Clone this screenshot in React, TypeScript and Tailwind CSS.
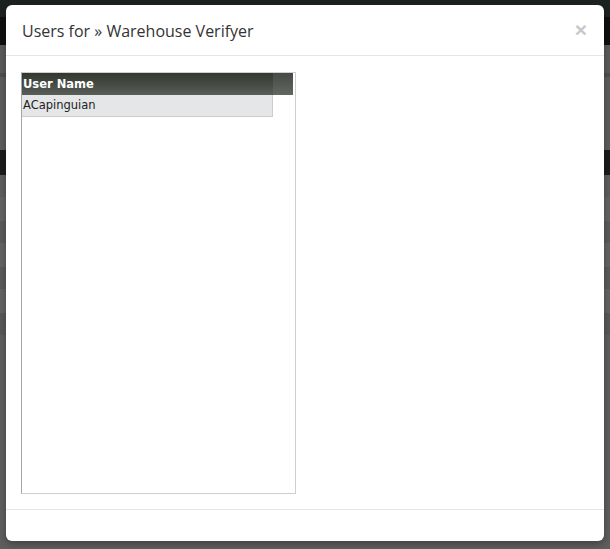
import React from "react";

const users = ["ACapinguian"];

export default function App() {
  return (
    <div className="relative w-[610px] h-[549px] overflow-hidden bg-[#5e5e5e]">
      {/* page behind the overlay */}
      <div className="flex flex-col">
        <div className="h-[17px] bg-[#1c2220]" />
        <div className="h-[28px] bg-[#0e0f0f]" />
        <div className="h-[28px] bg-[#5a5a5a]" />
        <div className="h-[4px] bg-[#4e4e4e]" />
        <div className="h-[73px] bg-[#5c5c5c]" />
        <div className="h-[25px] bg-[#1b1b1b]" />
        <div className="h-[22px] bg-[#5d5d5d]" />
        <div className="h-[24px] bg-[#636363]" />
        <div className="h-[22px] bg-[#5a5a5a]" />
        <div className="h-[24px] bg-[#636363]" />
        <div className="h-[22px] bg-[#5a5a5a]" />
        <div className="h-[24px] bg-[#636363]" />
        <div className="h-[22px] bg-[#585858]" />
      </div>

      {/* modal */}
      <div className="absolute left-[6px] top-[5px] w-[598px] h-[536px] bg-white rounded-[6px] flex flex-col shadow-[0_3px_7px_rgba(0,0,0,0.3)]">
        <div className="h-[51px] shrink-0 flex items-center justify-between px-[16px] border-b border-[#e5e5e5]">
          <h3 className="text-[16px] text-[#333] font-['Open_Sans',sans-serif] pt-[1px]">
            Users for » Warehouse Verifyer
          </h3>
          <span className="text-[21px] leading-none font-bold text-[#c8c8c8] font-['Liberation_Sans',sans-serif] mr-[1px] mb-[2px]">
            ×
          </span>
        </div>

        <div className="h-[453px] shrink-0 pt-[16px] pl-[15px]">
          <div className="w-[275px] h-[422px] border border-[#cfcfcf] border-l-[#a6a6a6] pr-[2px] font-['DejaVu_Sans',Verdana,sans-serif] text-[11.5px]">
            <div className="flex h-[22px]">
              <div className="w-[251px] bg-gradient-to-b from-[#33382f] to-[#585e58] text-white font-bold flex items-center pl-[1px] pt-[1px]">
                User Name
              </div>
              <div className="flex-1 bg-gradient-to-b from-[#454a45] to-[#626762]" />
            </div>
            {users.map((u) => (
              <div
                key={u}
                className="w-[251px] h-[22px] bg-[#e5e6e7] border-r border-b border-[#cdcdcd] flex items-center pl-[1px] pt-[1px] text-[#222]"
              >
                {u}
              </div>
            ))}
          </div>
        </div>

        <div className="flex-1 border-t border-[#e5e5e5]" />
      </div>
    </div>
  );
}
